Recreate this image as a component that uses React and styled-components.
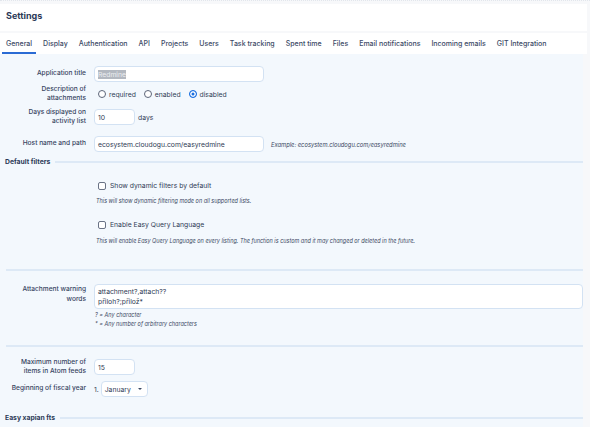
import React from "react";
import styled, { createGlobalStyle } from "styled-components";

const Global = createGlobalStyle`
  html, body {
    margin: 0;
    padding: 0;
    background: #f7f8fa;
    font-family: Inter, "Noto Sans", sans-serif;
    color: #3b4863;
    overflow: hidden;
  }
`

const Page = styled.div`
  width: 590px;
  height: 427px;
  border-top: 1px dotted #e2e6ec;
  padding-top: 3px;
  box-sizing: border-box;
`
const Header = styled.div`
  width: 587px;
  height: 27px;
  background: #fff;
  padding: 6px 0 0 6px;
  box-sizing: border-box;
  font-size: 9px;
  line-height: 11px;
  font-weight: 700;
  color: #2c3a57;
`
const TabBar = styled.div`
  width: 587px;
  height: 21px;
  margin-top: 2px;
  background: #fff;
  display: flex;
  align-items: stretch;
  padding-left: 2px;
  gap: 3px;
  box-sizing: border-box;
`
const Tab = styled.div`
  display: flex;
  align-items: center;
  padding: 1px 4px 0;
  font-size: 7px;
  font-weight: 500;
  color: #3c4a66;
  white-space: nowrap;
  border-bottom: 2px solid ${p => (p.$active ? "#2a6bd4" : "transparent")};
`
const Content = styled.div`
  width: 583px;
  height: 380px;
  background: #f3f8fd;
  padding: 12px 0 0 6px;
  box-sizing: border-box;
  overflow: hidden;
`
const Row = styled.div`
  display: grid;
  grid-template-columns: 88px 1fr;
  align-items: center;
  min-height: ${p => p.$h || 16}px;
  margin-bottom: ${p => p.$mb ?? 4}px;
`
const Label = styled.div`
  text-align: right;
  padding-right: 8px;
  margin-left: -6px;
  font-size: 6.6px;
  line-height: 9.5px;
  font-weight: 500;
  color: #37445f;
`
const Field = styled.div`
  display: flex;
  align-items: center;
  gap: 3px;
  font-size: 6.8px;
  color: #2f3b55;
`
const Input = styled.div`
  width: ${p => p.$w}px;
  height: 16px;
  background: #fff;
  border: 1px solid #d3e2f3;
  border-radius: 4px;
  box-sizing: border-box;
  display: flex;
  align-items: center;
  padding-left: 3px;
  font-size: 6.8px;
  color: #2f3b55;
`
const Selected = styled.span`
  background: #b3b8c0;
  color: #eceef1;
`
const RadioGroup = styled.div`
  display: flex;
  align-items: center;
  gap: 8px;
  padding-left: 4px;
`
const RadioOpt = styled.label`
  display: flex;
  align-items: center;
  gap: 3px;
  font-size: 6.8px;
  color: #2f3b55;
`
const Radio = styled.span`
  width: 8px;
  height: 8px;
  border-radius: 50%;
  border: 1px solid #5d6679;
  box-sizing: border-box;
  background: ${p => (p.$checked ? "#1a6fe0" : "#fff")};
  box-shadow: ${p => (p.$checked ? "inset 0 0 0 1.5px #fff" : "none")};
  ${p => p.$checked && "border-color: #1a6fe0;"}
`
const Example = styled.span`
  font-size: 5.8px;
  font-style: italic;
  color: #3b4863;
  margin-left: 4px;
`
const Legend = styled.div`
  display: flex;
  align-items: center;
  gap: 5px;
  font-size: 6.8px;
  font-weight: 700;
  color: #2c3a57;
  margin-left: -1px;
  &::after {
    content: "";
    flex: 1;
    height: 2px;
    background: #dde9f6;
  }
`
const CheckRow = styled.div`
  display: flex;
  align-items: center;
  gap: 4px;
  padding-left: 92px;
  font-size: 6.8px;
  color: #2f3b55;
`
const Checkbox = styled.span`
  width: 8px;
  height: 8px;
  border: 1px solid #6a7386;
  border-radius: 2px;
  background: #fff;
  box-sizing: border-box;
`
const Note = styled.div`
  padding-left: ${p => p.$pl ?? 90}px;
  font-size: 5.5px;
  line-height: 9px;
  font-style: italic;
  color: #3b4863;
`
const Spacer = styled.div`
  height: ${p => p.$h}px;
`
const Divider = styled.div`
  height: 2px;
  background: #dde9f6;
  margin: ${p => p.$m};
`
const TextArea = styled.div`
  width: 489px;
  height: 25px;
  background: #fff;
  border: 1px solid #d3e2f3;
  border-radius: 4px;
  box-sizing: border-box;
  padding: 2px 3px;
  font-size: 6.8px;
  line-height: 10px;
  color: #2f3b55;
`
const Select = styled.div`
  width: 47px;
  height: 16px;
  background: #fff;
  border: 1px solid #d3e2f3;
  border-radius: 4px;
  box-sizing: border-box;
  display: flex;
  align-items: center;
  justify-content: space-between;
  padding: 0 5px 0 3px;
  font-size: 6.8px;
  color: #2f3b55;
  &::after {
    content: "";
    border-left: 2px solid transparent;
    border-right: 2px solid transparent;
    border-top: 2px solid #3b4863;
  }
`

const tabs = [
  "General", "Display", "Authentication", "API", "Projects", "Users",
  "Task tracking", "Spent time", "Files", "Email notifications",
  "Incoming emails", "GIT Integration",
];

export default function App() {
  return (
    <>
      <Global />
      <Page>
        <Header>Settings</Header>
        <TabBar>
          {tabs.map((t, i) => (
            <Tab key={t} $active={i === 0}>{t}</Tab>
          ))}
        </TabBar>
        <Content>
          <Row $mb={2}>
            <Label>Application title</Label>
            <Field>
              <Input $w={170}><Selected>Redmine</Selected></Input>
            </Field>
          </Row>
          <Row $h={20} $mb={3}>
            <Label>Description of<br />attachments</Label>
            <RadioGroup>
              <RadioOpt><Radio />required</RadioOpt>
              <RadioOpt><Radio />enabled</RadioOpt>
              <RadioOpt><Radio $checked />disabled</RadioOpt>
            </RadioGroup>
          </Row>
          <Row $h={20} $mb={9}>
            <Label>Days displayed on<br />activity list</Label>
            <Field>
              <Input $w={41}>10</Input>
              <span>days</span>
            </Field>
          </Row>
          <Row $mb={5}>
            <Label>Host name and path</Label>
            <Field>
              <Input $w={170}>ecosystem.cloudogu.com/easyredmine</Input>
              <Example>Example: ecosystem.cloudogu.com/easyredmine</Example>
            </Field>
          </Row>
          <Legend>Default filters</Legend>
          <Spacer $h={15} />
          <CheckRow><Checkbox />Show dynamic filters by default</CheckRow>
          <Note style={{ marginTop: 7 }}>This will show dynamic filtering mode on all supported lists.</Note>
          <Spacer $h={14} />
          <CheckRow><Checkbox />Enable Easy Query Language</CheckRow>
          <Note style={{ marginTop: 8 }}>This will enable Easy Query Language on every listing. The function is custom and it may changed or deleted in the future.</Note>
          <Divider $m="23px 0 13px 0" />
          <Row $h={25} $mb={2}>
            <Label style={{ alignSelf: "start", paddingTop: 1 }}>Attachment warning<br />words</Label>
            <TextArea>attachment?,attach??<br />přiloh?;přilož*</TextArea>
          </Row>
          <Note $pl={89}>? = Any character</Note>
          <Note $pl={89}>* = Any number of arbitrary characters</Note>
          <Divider $m="16px 0 10px 0" />
          <Row $h={20} $mb={4}>
            <Label>Maximum number of<br />items in Atom feeds</Label>
            <Field>
              <Input $w={41}>15</Input>
            </Field>
          </Row>
          <Row>
            <Label>Beginning of fiscal year</Label>
            <Field style={{ gap: 2 }}>
              <span>1.</span>
              <Select>January</Select>
            </Field>
          </Row>
          <Spacer $h={12} />
          <Legend>Easy xapian fts</Legend>
        </Content>
      </Page>
    </>
  );
}
